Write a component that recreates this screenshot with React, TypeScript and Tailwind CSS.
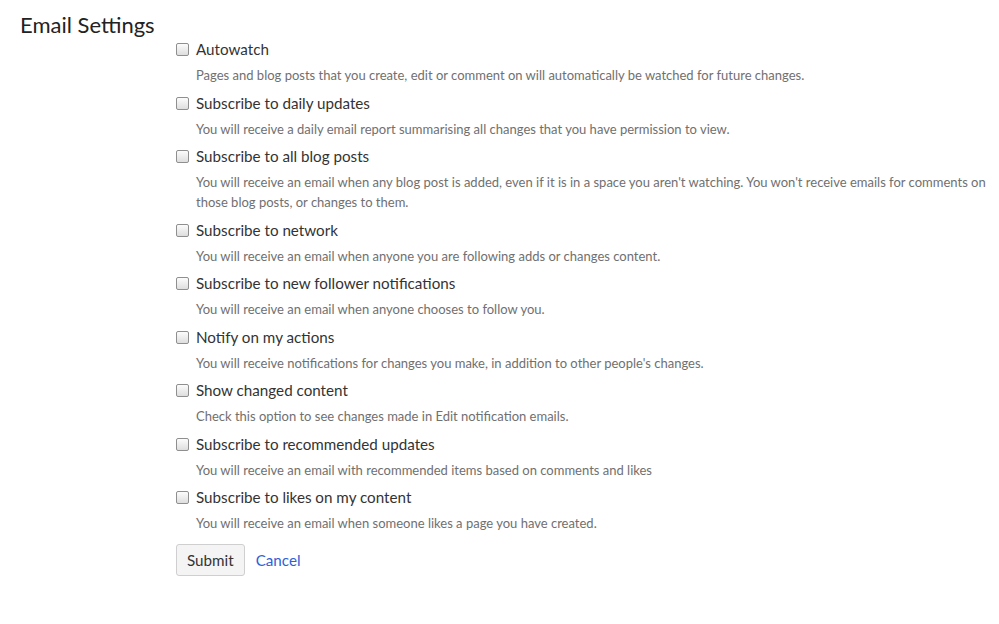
const items = [
  {
    label: "Autowatch",
    desc: "Pages and blog posts that you create, edit or comment on will automatically be watched for future changes.",
  },
  {
    label: "Subscribe to daily updates",
    desc: "You will receive a daily email report summarising all changes that you have permission to view.",
  },
  {
    label: "Subscribe to all blog posts",
    desc: "You will receive an email when any blog post is added, even if it is in a space you aren't watching. You won't receive emails for comments on those blog posts, or changes to them.",
  },
  {
    label: "Subscribe to network",
    desc: "You will receive an email when anyone you are following adds or changes content.",
  },
  {
    label: "Subscribe to new follower notifications",
    desc: "You will receive an email when anyone chooses to follow you.",
  },
  {
    label: "Notify on my actions",
    desc: "You will receive notifications for changes you make, in addition to other people's changes.",
  },
  {
    label: "Show changed content",
    desc: "Check this option to see changes made in Edit notification emails.",
  },
  {
    label: "Subscribe to recommended updates",
    desc: "You will receive an email with recommended items based on comments and likes",
  },
  {
    label: "Subscribe to likes on my content",
    desc: "You will receive an email when someone likes a page you have created.",
  },
];

function Checkbox() {
  return (
    <span className="mt-[6px] w-[13px] h-[13px] shrink-0 rounded-[2px] border border-[#8f8f8f] bg-gradient-to-b from-[#fcfcfc] to-[#dedede]" />
  );
}

export default function App() {
  return (
    <div className="w-[999px] h-[624px] bg-white font-['Lato','Noto_Sans',sans-serif] text-[#333]">
      <h1 className="pl-[20px] pt-[10px] text-[22px] leading-[30px] font-normal text-[#222]">Email Settings</h1>
      <div className="pl-[176px] pr-[10px] -mt-[3px]">
        {items.map((item) => (
          <div key={item.label} className="flex gap-[7px] mb-[5.5px]">
            <Checkbox />
            <div>
              <div className="text-[15.2px] leading-[24px]">{item.label}</div>
              <p className="mt-[4px] text-[13px] leading-[20px] text-[#707070]">{item.desc}</p>
            </div>
          </div>
        ))}
        <div className="flex items-center gap-[11px] mt-[11px]">
          <button className="h-[32px] px-[10px] rounded-[3px] border border-[#cfcfcf] bg-[#f4f4f4] text-[15.2px] text-[#333]">
            Submit
          </button>
          <a href="#" className="text-[15.2px] text-[#2d62d6]">
            Cancel
          </a>
        </div>
      </div>
    </div>
  );
}
